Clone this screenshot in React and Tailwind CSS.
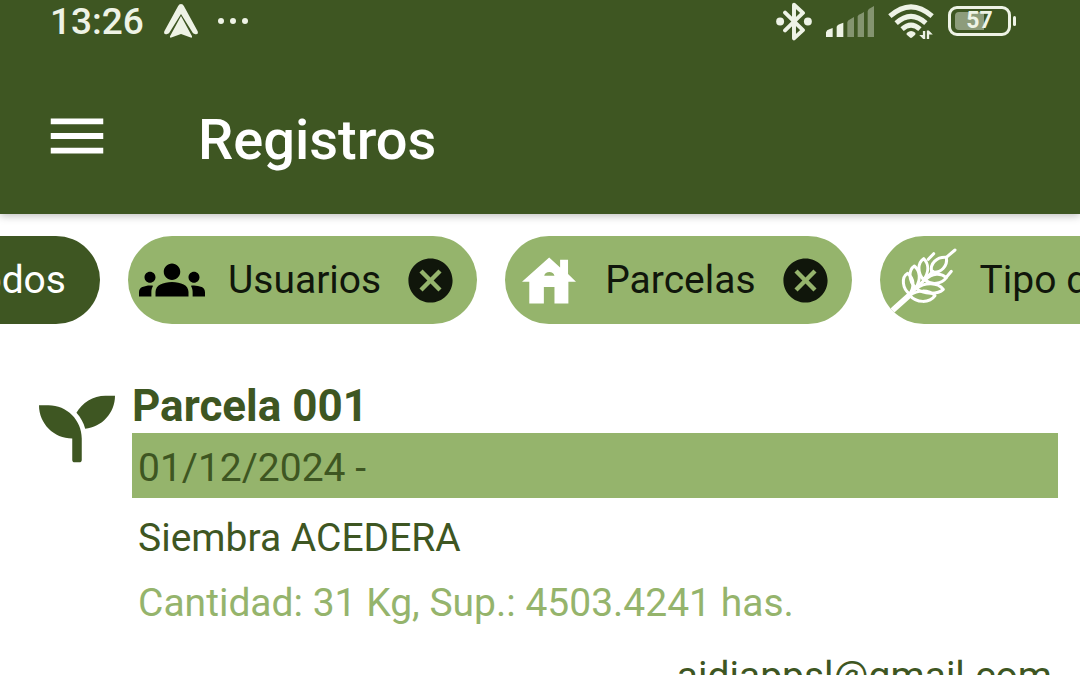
import { MdCancel, MdGroups, MdMenu } from "react-icons/md";
import { FaSeedling } from "react-icons/fa";

function HouseIcon() {
  return (
    <svg viewBox="0 0 163 139" className="h-[47px] w-[54px]" fill="white" aria-hidden="true">
      <path
        fillRule="evenodd"
        d="M82 0 115 30V7H139V50L163 73H140V139H98V89H66V139H22V73H0ZM67 55H98A16 15 0 0 0 67 55Z"
      />
    </svg>
  );
}

function WheatIcon() {
  return (
    <svg
      viewBox="32 21 198 198"
      className="h-[66px] w-[66px]"
      fill="none"
      stroke="white"
      strokeWidth="9"
      strokeLinecap="round"
      strokeLinejoin="round"
      aria-hidden="true"
    >
      <path d="M40 208 86 167" strokeWidth="17" />
      <path d="M86 166 158 94" />
      {/* left grains */}
      <path d="M88 162C66 146 62 112 82 100C100 114 104 140 88 162Z" />
      <path d="M106 144C84 122 84 90 102 78C120 92 122 120 106 144Z" />
      <path d="M130 120C110 98 112 68 130 56C146 72 146 96 130 120Z" />
      <path d="M144 58 160 41" />
      {/* tip */}
      <path d="M154 96C148 70 170 50 198 52C203 78 182 101 154 96Z" />
      <path d="M198 52 224 30" />
      {/* right grains */}
      <path d="M88 166C108 190 148 190 164 167C144 148 112 150 88 166Z" />
      <path d="M108 145C130 164 172 164 189 148C172 126 134 126 108 145Z" />
      <path d="M134 120C154 137 184 132 198 113C182 98 156 99 134 120Z" />
      <path d="M198 112 213 94" />
    </svg>
  );
}

function NavigationIcon() {
  return (
    <svg viewBox="0 0 102 102" className="h-[34px] w-[34px]" fill="currentColor" aria-hidden="true">
      <path d="M51 0Q57 0 60 7L101 82Q104 92 94 91L87 88 51 30 15 88 8 91Q-2 92 1 82L42 7Q45 0 51 0Z" />
      <path d="M51 36 84 97Q85 103 78 100L51 90 24 100Q17 103 18 97Z" />
    </svg>
  );
}

function BluetoothIcon() {
  return (
    <svg viewBox="0 0 108 118" className="h-[39px] w-[36px]" aria-hidden="true">
      <path
        d="M27 32 81 85 54 110V8L81 33 27 86"
        fill="none"
        stroke="currentColor"
        strokeWidth="12"
        strokeLinejoin="round"
        strokeLinecap="round"
      />
      <circle cx="12" cy="59" r="12" fill="currentColor" />
      <circle cx="96" cy="59" r="12" fill="currentColor" />
    </svg>
  );
}

function SignalIcon() {
  return (
    <svg viewBox="0 0 144 93" className="h-[31px] w-[48px]" fill="currentColor" aria-hidden="true">
      <path d="M0 93V79Q2 72 10 70L20 66V93ZM32 93V62Q34 56 42 54L52 50V93Z" />
      <g opacity="0.4">
        <path d="M64 93V48Q66 42 74 39L84 33V93ZM95 93V31Q97 25 105 23L114 18V93ZM125 93V15Q127 8 135 5L144 0V93Z" />
      </g>
    </svg>
  );
}

function WifiIcon() {
  return (
    <svg viewBox="0 0 138 106" className="h-[35px] w-[46px]" aria-hidden="true">
      <g fill="none" stroke="currentColor" strokeWidth="15">
        <path d="M5 37Q69-20 133 37" />
        <path d="M24 58Q69 17 114 58" />
        <path d="M42 76Q69 52 96 76" />
      </g>
      <path d="M57 87Q69 77 82 87Q84 91 81 94L73 101Q69 105 65 101L56 93Q54 90 57 87Z" fill="currentColor" />
      <path d="M105 82H112V106H106L94 94H105ZM117 106V80H123L135 92H124V106Z" fill="currentColor" />
    </svg>
  );
}

function Battery({ level }) {
  return (
    <div className="flex items-center gap-0.5">
      <div className="relative flex h-[30px] w-[63px] items-center justify-center rounded-[9px] border-3 border-current p-1">
        <div
          className="absolute inset-y-[3px] left-1 rounded-l-sm bg-[#8d9c7b]"
          style={{ width: `${level / 2}px` }}
        />
        <span className="relative text-[23px] leading-6 font-bold">{level}</span>
      </div>
      <div className="h-2.5 w-[3px] rounded-sm bg-current" />
    </div>
  );
}

const filters = [
  {
    label: "Usuarios",
    icon: <MdGroups size={66} className="text-black" />,
  },
  { label: "Parcelas", icon: <HouseIcon /> },
  { label: "Tipo de registro", icon: <WheatIcon /> },
];

function FilterChip({ label, icon }) {
  return (
    <button
      type="button"
      className="flex h-[88px] shrink-0 items-center gap-[23px] overflow-hidden rounded-full bg-[#95b46c] pr-5 pl-[11px] text-[39px] text-[#10160b]"
    >
      <span className="flex w-[66px] items-center justify-center">{icon}</span>
      <span className="whitespace-nowrap">{label}</span>
      <MdCancel size={53} />
    </button>
  );
}

function StatusBar() {
  return (
    <div className="flex h-[42px] items-center justify-between pr-16 pl-[50px] text-[#eef3e6]">
      <div className="flex items-center gap-5">
        <span className="pt-0.5 text-[37px] leading-10 font-medium">13:26</span>
        <NavigationIcon />
        <div className="flex gap-1.5">
          <span className="size-1.5 rounded-full bg-current" />
          <span className="size-1.5 rounded-full bg-current" />
          <span className="size-1.5 rounded-full bg-current" />
        </div>
      </div>
      <div className="flex items-center gap-3.5">
        <BluetoothIcon />
        <SignalIcon />
        <WifiIcon />
        <Battery level={57} />
      </div>
    </div>
  );
}

export default function App() {
  return (
    <div className="h-screen overflow-hidden bg-white font-['Roboto',sans-serif]">
      {/* HEADER */}
      <header className="bg-[#3e5622] text-white shadow-[0_2px_8px_rgba(0,0,0,0.25)]">
        <StatusBar />
        <div className="flex items-center gap-[86px] pt-4 pl-[42px]">
          <button type="button" aria-label="Menú" className="py-[43px]">
            <MdMenu size={70} />
          </button>
          <h1 className="pt-2 text-[56px] leading-16 font-medium">Registros</h1>
        </div>
      </header>

      {/* FILTERS */}
      <div className="-ml-[72px] flex gap-7 overflow-hidden pt-[22px]">
        <button
          type="button"
          className="flex h-[88px] w-[172px] shrink-0 items-center justify-end rounded-full bg-[#3e5622] pr-[34px] text-[39px] text-white"
        >
          Todos
        </button>
        {filters.map((filter) => (
          <FilterChip key={filter.label} {...filter} />
        ))}
      </div>

      {/* RECORD */}
      <article className="flex gap-[17px] pt-[55px] pr-[22px] pl-[39px] text-[39px] leading-[65px] text-[#3e5622]">
        <FaSeedling size={76} className="mt-3 shrink-0" />
        <div className="min-w-0 grow">
          <h2 className="text-[44px] leading-[54px] font-bold">Parcela 001</h2>
          <p className="bg-[#95b46c] pt-1.5 pl-1.5 leading-[59px]">01/12/2024 -</p>
          <p className="mt-2 pl-1.5">Siembra ACEDERA</p>
          <p className="pl-1.5 text-[#95b46c]">Cantidad: 31 Kg, Sup.: 4503.4241 has.</p>
          <p className="mt-2 pr-1.5 text-right">aidiappsl@gmail.com</p>
        </div>
      </article>
    </div>
  );
}
